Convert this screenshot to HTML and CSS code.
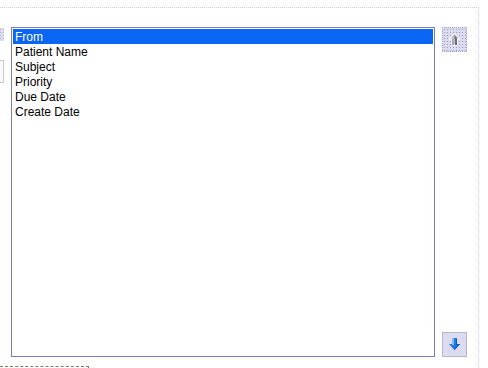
FILE: index.html
```html
<!DOCTYPE html>
<html lang="en">
<head>
    <meta charset="UTF-8">
    <title>Column Order</title>
    <link rel="stylesheet" href="styles.css">
</head>
<body>
    <div class="panel">
        <div class="row">
            <!-- clipped buttons of the neighbouring column -->
            <div class="stub">
                <div class="stub-btn"></div>
                <div class="stub-box"></div>
            </div>

            <div class="listbox">
                <div class="item selected">From</div>
                <div class="item">Patient Name</div>
                <div class="item">Subject</div>
                <div class="item">Priority</div>
                <div class="item">Due Date</div>
                <div class="item">Create Date</div>
            </div>

            <div class="buttons">
                <div class="move-btn disabled" title="Move up">
                    <svg width="15" height="15" viewBox="0 0 15 15">
                        <path d="M7.5 1.5 L13 7 L10 7 L10 13 L5 13 L5 7 L2 7 Z" fill="#c4c4d4" stroke="#ffffff" stroke-width="1"/>
                        <path d="M7.5 3 L10 6 L10 13 L8 13 L8 7 L7.5 7 Z" fill="#6c6c78"/>
                        <path d="M5 7 L7 7 L7 13 L5 13 Z" fill="#a8a8b4"/>
                    </svg>
                </div>
                <div class="move-btn" title="Move down">
                    <svg width="15" height="15" viewBox="0 0 15 15">
                        <path d="M5 1 L10 1 L10 7 L13 7 L7.5 13 L2 7 L5 7 Z" fill="#1f7ae8"/>
                        <path d="M5 1 L7 1 L7 8 L5 8 Z" fill="#7cc0ff"/>
                        <path d="M9 2 L10 2 L10 7 L13 7 L7.5 13 L7 12 L11 8 L9 8 Z" fill="#0b55c0"/>
                    </svg>
                </div>
            </div>
        </div>
        <div class="footer"></div>
    </div>
</body>
</html>
```

FILE: styles.css
```css
* {
    margin: 0;
    padding: 0;
    box-sizing: border-box;
}

body {
    background: #ffffff;
    font-family: "Liberation Sans", Arial, sans-serif;
    font-size: 12px;
    color: #000;
}

.panel {
    margin-top: 7px;
    width: 479px;
    height: 361px;
    border-top: 1px dotted #ccccec;
    border-right: 1px dotted #ccccec;
    overflow: hidden;
}

.row {
    display: flex;
    padding-top: 19px;
}

.stub {
    width: 4px;
    flex-shrink: 0;
    overflow: hidden;
}

.stub-btn {
    width: 20px;
    height: 13px;
    margin-top: 1px;
    margin-left: -16px;
    background-color: #dcdcf0;
    background-image: radial-gradient(#b4b4cc 0.8px, transparent 0.9px);
    background-size: 3px 3px;
}

.stub-box {
    width: 20px;
    height: 23px;
    margin-top: 19px;
    margin-left: -16px;
    border: 1px solid #c8c8c8;
    background: #fafafa;
}

.listbox {
    margin-left: 7px;
    width: 424px;
    height: 330px;
    border: 1px solid #7c7cb4;
    padding: 1px;
    background: #fff;
}

.item {
    height: 15px;
    line-height: 14px;
    padding-top: 1px;
    padding-left: 2px;
    white-space: nowrap;
}

.item.selected {
    color: #fff;
    background-color: #0a64f4;
    background-image: radial-gradient(#3c8cff 0.6px, transparent 0.7px);
    background-size: 2px 2px;
}

.buttons {
    margin-left: 7px;
    width: 25px;
    height: 330px;
    display: flex;
    flex-direction: column;
    justify-content: space-between;
}

.move-btn {
    width: 25px;
    height: 25px;
    display: flex;
    align-items: center;
    justify-content: center;
    border: 1px solid #b4b4d4;
    background-color: #f4f4fc;
    background-image: radial-gradient(#dcdcf0 0.8px, transparent 0.9px);
    background-size: 2px 2px;
}

.move-btn.disabled {
    border: 1px dotted #a8a8c8;
    background-color: #dcdcf0;
    background-image: radial-gradient(#9c9cbc 0.8px, transparent 0.9px);
    background-size: 3px 3px;
}

.footer {
    margin-top: 9px;
    width: 89px;
    height: 10px;
    border-top: 1px dashed #7c7c5c;
    border-right: 1px solid #7c7c5c;
}
```
